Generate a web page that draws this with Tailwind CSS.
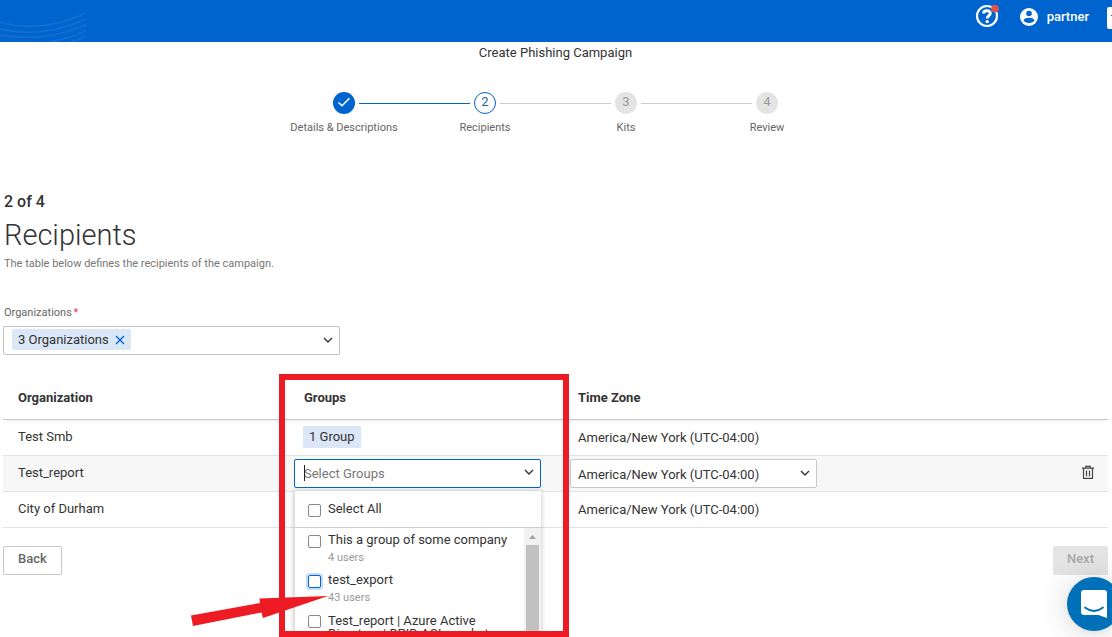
<!DOCTYPE html>
<html lang="en">
<head>
<meta charset="utf-8">
<meta name="viewport" content="width=device-width, initial-scale=1">
<title>Create Phishing Campaign</title>
<script src="https://cdn.jsdelivr.net/npm/@tailwindcss/browser@4"></script>
</head>
<body class="relative h-screen overflow-hidden bg-white font-['Roboto',sans-serif] text-[13px] leading-5 text-[#333]">

<header class="relative flex h-[42px] items-start justify-end overflow-hidden bg-[#0064cf] text-white">
  <svg class="absolute left-0 top-0 h-[42px] w-[86px]" viewBox="0 0 86 42" fill="none" stroke="#116fd3" stroke-width="1.800" aria-hidden="true">
    <path d="M0 22Q42 34 86 13M0 29Q42 39 86 19M0 35Q42 43 86 25M48 42Q68 39 86 31M70 42Q79 40 86 36"/>
  </svg>
  <button class="relative mt-1 mr-5 size-6" aria-label="Help">
    <svg class="size-6" viewBox="0 0 24 24" fill="none" stroke="#fff" aria-hidden="true">
      <circle cx="12" cy="12" r="10" stroke-width="2.200"/>
      <path d="M8.600 9.600C8.600 5.600 15.500 5.800 15.300 9.400C15.200 11.600 12.200 11.600 12.200 14.600" stroke-width="3"/>
      <circle cx="12.200" cy="17.600" r="1.700" fill="#fff" stroke="none"/>
      <circle cx="20" cy="4.600" r="3.900" fill="#d9534f" stroke="none"/>
    </svg>
  </button>
  <button class="mt-[7px] flex items-center gap-2 font-medium">
    <svg class="size-5" viewBox="0 0 20 20" aria-hidden="true">
      <circle cx="10" cy="10" r="9" fill="#fff"/>
      <circle cx="10" cy="6.500" r="2.800" fill="#0064cf"/>
      <path d="M4.500 13.200C5.700 9.900 14.300 9.900 15.500 13.200C13.800 16.800 6.200 16.800 4.500 13.200Z" fill="#0064cf"/>
    </svg>
    partner
  </button>
  <span class="mt-[7px] ml-[18px] flex h-[22px] w-[5px] items-start overflow-hidden rounded-l-xs bg-white pt-2 pl-1"><span class="h-px w-1 bg-[#0064cf]"></span></span>
</header>

<main class="pr-1 pl-[3px]">
  <h1 class="pt-px text-center">Create Phishing Campaign</h1>

  <ol class="mx-auto mt-[29px] flex w-[564px] text-center text-[11px] leading-4 text-[#666]">
    <li class="relative flex flex-1 flex-col items-center gap-1.5">
      <span class="flex size-[22px] items-center justify-center rounded-full bg-[#0064cf]">
        <svg class="size-4" viewBox="0 0 16 16" fill="none" stroke="#fff" stroke-width="1.500" aria-hidden="true"><path d="M2.500 7.500L6 10.800L13.500 3.300"/></svg>
      </span>
      Details &amp; Descriptions
      <span class="absolute top-[11px] left-[85px] h-px w-[111px] bg-[#0064cf]"></span>
    </li>
    <li class="relative flex flex-1 flex-col items-center gap-1.5">
      <span class="flex size-[22px] items-center justify-center rounded-full border border-[#0064cf] pb-0.5 text-[13px] text-[#2a5fa5]">2</span>
      Recipients
      <span class="absolute top-[11px] left-[85px] h-px w-[111px] bg-[#ccc]"></span>
    </li>
    <li class="relative flex flex-1 flex-col items-center gap-1.5">
      <span class="flex size-[22px] items-center justify-center rounded-full bg-[#e4e4e4] pb-0.5 text-[13px] text-[#999]">3</span>
      Kits
      <span class="absolute top-[11px] left-[85px] h-px w-[111px] bg-[#ccc]"></span>
    </li>
    <li class="flex flex-1 flex-col items-center gap-1.5">
      <span class="flex size-[22px] items-center justify-center rounded-full bg-[#e4e4e4] pb-0.5 text-[13px] text-[#999]">4</span>
      Review
    </li>
  </ol>

  <div class="pl-px">
    <p class="mt-14 text-base leading-5 font-medium">2 of 4</p>
    <h2 class="mt-[3px] mb-px text-[29px] leading-10 font-light">Recipients</h2>
    <p class="text-[11px] leading-4 text-[#777]">The table below defines the recipients of the campaign.</p>
    <p id="org-label" class="mt-[33px] text-[11px] leading-4 text-[#666]">Organizations <span class="-ml-px text-[#d9455f]">*</span></p>
  </div>
  <div role="group" aria-labelledby="org-label" class="mt-[5px] flex h-[29px] w-[337px] items-center justify-between rounded-xs border border-[#c4c4c4] pr-[5px] pb-0.5 pl-2">
    <span class="flex h-[21px] items-center gap-1.5 rounded-xs bg-[#dbe6f7] px-1.5">3 Organizations
      <button aria-label="Clear organizations"><svg class="size-[10px]" viewBox="0 0 10 10" fill="none" stroke="#0064cf" stroke-width="1.300" aria-hidden="true"><path d="M1 1L9 9M9 1L1 9"/></svg></button>
    </span>
    <button aria-label="Open organizations"><svg class="size-3" viewBox="0 0 12 12" fill="none" stroke="#333" stroke-width="1.400" aria-hidden="true"><path d="M2 4L6 8L10 4"/></svg></button>
  </div>

  <section class="relative mt-[21px]">
    <table class="w-full table-fixed border-collapse text-left">
      <colgroup><col class="w-[286px]"><col class="w-[276px]"><col><col class="w-[60px]"></colgroup>
      <thead>
        <tr class="h-[43px] border-b border-[#c8c8c8] shadow-[0_4px_3px_-2px_rgba(0,0,0,0.08)]">
          <th class="pt-px pl-[15px] font-bold">Organization</th>
          <th class="pt-px pl-[15px] font-bold">Groups</th>
          <th class="pt-px pl-[13px] font-bold">Time Zone</th>
          <th></th>
        </tr>
      </thead>
      <tbody>
        <tr class="h-9 border-b border-[#e2e2e2]">
          <td class="pb-px pl-[15px]">Test Smb</td>
          <td class="pb-px pl-[14px]"><span class="inline-flex h-[22px] items-center rounded-xs bg-[#dbe6f7] px-1.5 align-middle">1 Group</span></td>
          <td class="pt-px pl-[13px]">America/New York (UTC-04:00)</td>
          <td></td>
        </tr>
        <tr class="h-9 border-b border-[#e2e2e2] bg-[#f7f7f7]">
          <td class="pb-px pl-[15px]">Test_report</td>
          <td class="p-0 pl-[5px]">
            <div class="relative w-[247px]">
              <input type="text" role="combobox" aria-expanded="true" aria-controls="group-list" aria-label="Select Groups" placeholder="Select Groups" class="block h-[29px] w-full rounded-xs border border-[#0064cf] bg-white pl-[9px] outline-none placeholder:text-[#777]">
              <span class="absolute top-[6px] left-[10px] h-4 w-px bg-[#222]"></span>
              <svg class="absolute top-[7px] right-[6px] size-3" viewBox="0 0 12 12" fill="none" stroke="#333" stroke-width="1.400" aria-hidden="true"><path d="M2 4L6 8L10 4"/></svg>
              <div id="group-list" class="absolute top-8 left-0 h-[141px] w-[247px] overflow-hidden border-l border-[#ddd] bg-white shadow-[0_0_5px_rgba(0,0,0,0.25)]">
                <label class="flex h-[37px] items-center gap-[7px] border-b border-[#ccc] pl-[13px]">
                  <input type="checkbox" class="mt-[3px] size-[13px] appearance-none rounded-xs border border-[#888]">
                  Select All
                </label>
                <div class="flex">
                  <div class="flex flex-1 flex-col gap-1 pt-0.5 pl-[13px]">
                    <label class="flex items-start gap-[7px]">
                      <input type="checkbox" class="mt-[5px] size-[13px] shrink-0 appearance-none rounded-xs border border-[#888]">
                      <span>This a group of some company<span class="block text-[11px] leading-4 text-[#999]">4 users</span></span>
                    </label>
                    <label class="flex items-start gap-[7px]">
                      <input type="checkbox" class="mt-[5px] size-[13px] shrink-0 appearance-none rounded-xs border border-[#0064cf] ring-2 ring-[#c6dcf6]">
                      <span>test_export<span class="block text-[11px] leading-4 text-[#999]">43 users</span></span>
                    </label>
                    <label class="flex items-start gap-[7px]">
                      <input type="checkbox" class="mt-[5px] size-[13px] shrink-0 appearance-none rounded-xs border border-[#888]">
                      <span class="pt-1 leading-[13px]">Test_report | Azure Active Directory | BPID ACL market</span>
                    </label>
                  </div>
                  <div class="flex h-[110px] w-[17px] flex-col items-center bg-[#f1f1f1]">
                    <svg class="h-[17px] w-[17px] shrink-0" viewBox="0 0 17 17" fill="#a3a3a3" aria-hidden="true"><path d="M5 11L8.500 7L12 11Z"/></svg>
                    <span class="w-[13px] flex-1 bg-[#c1c1c1]"></span>
                  </div>
                </div>
              </div>
            </div>
          </td>
          <td class="p-0 pl-[5px]">
            <div class="relative w-[247px]">
              <select aria-label="Time zone" class="block h-[29px] w-full appearance-none rounded-xs border border-[#c8c8c8] bg-white pt-[3px] pl-[7px]"><option>America/New York (UTC-04:00)</option></select>
              <svg class="pointer-events-none absolute top-2 right-[6px] size-3" viewBox="0 0 12 12" fill="none" stroke="#333" stroke-width="1.400" aria-hidden="true"><path d="M2 4L6 8L10 4"/></svg>
            </div>
          </td>
          <td class="pr-[13px] pb-0.5 text-right">
            <button class="align-middle" aria-label="Delete row"><svg class="h-[15px] w-[14px]" viewBox="0 0 14 15" fill="none" stroke="#444" stroke-width="1.200" aria-hidden="true"><path d="M1 3.200H13M4.800 3V1.300H9.200V3M2.500 3.200V13.400H11.500V3.200M5.500 5.500V11.300M8.500 5.500V11.300"/></svg></button>
          </td>
        </tr>
        <tr class="h-9 border-b border-[#e2e2e2]">
          <td class="pb-px pl-[15px]">City of Durham</td>
          <td></td>
          <td class="pt-px pl-[13px]">America/New York (UTC-04:00)</td>
          <td></td>
        </tr>
      </tbody>
    </table>

    <!-- Callout frame and arrow over the Groups column -->
    <div class="pointer-events-none absolute -top-0.5 left-[276px] h-[263px] w-[290px] border-6 border-[#ed1c24]"></div>
    <svg class="pointer-events-none absolute top-[218px] left-[187px] h-[34px] w-[140px]" viewBox="0 0 140 34" fill="#ed1c24" aria-hidden="true"><path d="M1 21.500L70 9L69.500 4.500L138 2L73 24L71.500 18.500L3 32Z"/></svg>
  </section>

  <div class="mt-[18px] flex justify-between font-medium">
    <button class="h-[29px] rounded-xs border border-[#c8c8c8] px-[14px] pb-0.5 text-[#666]">Back</button>
    <button disabled class="h-[29px] rounded-xs bg-[#e4e4e4] px-[14px] pb-0.5 text-[#aaa]">Next</button>
  </div>
</main>

<button aria-label="Open chat" class="absolute -right-[9px] bottom-[6px] flex size-[54px] items-center justify-center rounded-full bg-[#0071b8] shadow-[0_1px_6px_rgba(0,0,0,0.06),0_2px_32px_rgba(0,0,0,0.16)]">
  <svg class="h-7 w-[26px]" viewBox="0 0 26 28" aria-hidden="true">
    <path d="M3 0H23Q26 0 26 3V28L17.500 25H3Q0 25 0 22V3Q0 0 3 0Z" fill="#fff"/>
    <path d="M4 17.500Q13 24.500 22 17.500" fill="none" stroke="#0071b8" stroke-width="1.800" stroke-linecap="round"/>
  </svg>
</button>
</body>
</html>
